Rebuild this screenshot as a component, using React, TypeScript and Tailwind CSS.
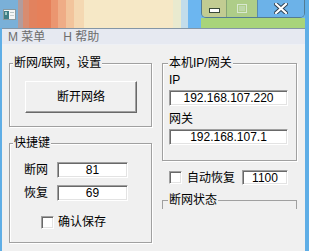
import React from 'react';

// Win classic look helpers
const sunken =
  'bg-white border border-t-[#a0a0a0] border-l-[#a0a0a0] border-b-white border-r-white shadow-[inset_1px_1px_0_#696969,inset_-1px_-1px_0_#e3e3e3]';
const group =
  'border border-[#a0a0a0] shadow-[inset_1px_1px_0_#ffffff,1px_1px_0_#ffffff]';
const legend = 'px-[1px] bg-[#f0f0f0] leading-[14px]';

function Field({ value, className }: { value: string; className: string }) {
  return (
    <div className={`${sunken} ${className} flex items-center justify-center leading-[12px]`}>
      {value}
    </div>
  );
}

function CheckBox() {
  return <div className={`${sunken} w-[13px] h-[13px] shrink-0`} />;
}

function AppIcon() {
  return (
    <svg width="13" height="11" viewBox="0 0 13 11">
      <rect x="0.5" y="0.5" width="12" height="10" fill="#f4f6f6" stroke="#8a9aa0" />
      <rect x="1" y="2" width="5" height="8" fill="#3f7f86" />
      <rect x="2" y="3" width="2" height="3" fill="#9fc9c4" />
      <rect x="7" y="3" width="4" height="1" fill="#b8c4c4" />
      <rect x="7" y="6" width="4" height="1" fill="#c8d0d0" />
    </svg>
  );
}

function CaptionButtons() {
  return (
    <div className="flex h-[18px] rounded-b-[5px] overflow-hidden border border-t-0 border-[#47636f]/70">
      <div className="w-[24px] flex items-end justify-center pb-[4px] bg-[#c2cc92]">
        <svg width="11" height="5" viewBox="0 0 11 5">
          <rect x="0.5" y="0.5" width="10" height="4" fill="#ffffff" stroke="#3a4a3a" />
        </svg>
      </div>
      <div className="w-[31px] flex items-center justify-center border-l border-[#6a8a6a]/60 bg-[#aecd88]">
        <svg width="10" height="9" viewBox="0 0 10 9">
          <rect x="0.5" y="0.5" width="9" height="8" fill="none" stroke="#d8e8d0" strokeWidth="1" />
          <rect x="2" y="2" width="6" height="5" fill="#c4dcb8" opacity="0.7" />
        </svg>
      </div>
      <div className="w-[47px] flex items-center justify-center border-l border-[#4a6f8a]/60 bg-[#6cb2e8]">
        <svg width="14" height="11" viewBox="0 0 14 11">
          <path d="M2 1 L12 10 M12 1 L2 10" stroke="#2c3e50" strokeWidth="4" strokeLinecap="square" />
          <path d="M2 1 L12 10 M12 1 L2 10" stroke="#ffffff" strokeWidth="2.2" strokeLinecap="square" />
        </svg>
      </div>
    </div>
  );
}

export default function App() {
  return (
    <div className="w-[309px] h-[251px] overflow-hidden bg-[#5faee6] font-['Liberation_Sans','Noto_Sans_CJK_SC',sans-serif] text-[12px] text-black">
      {/* Title bar: aero glass tint, drawn as soft colour bands */}
      <div className="h-[28px] flex">
        <div className="w-[18px] pl-[3px] pt-[9px] bg-[#7ab0d8]">
          <AppIcon />
        </div>
        <div className="w-[5px] bg-[#b29c9c]" />
        <div className="w-[6px] bg-[#d88c70]" />
        <div className="w-[8px] bg-[#e2825e]" />
        <div className="w-[14px] bg-[#e6805a]" />
        <div className="w-[8px] bg-[#eb9670]" />
        <div className="w-[8px] bg-[#efac86]" />
        <div className="w-[8px] bg-[#f2c49c]" />
        <div className="w-[10px] bg-[#f4d8b2]" />
        <div className="w-[90px] bg-[#f6e8c6]" />
        <div className="w-[8px] bg-[#e9eacf]" />
        <div className="w-[7px] bg-[#c2dcea]" />
        <div className="w-[13px] bg-[#6cb6f0]" />
        <div className="flex-1 flex flex-col bg-[#72b8e8]">
          <CaptionButtons />
          <div className="flex-1 bg-[#a8d47a]" />
        </div>
        <div className="w-[4px]" />
      </div>

      {/* Client area */}
      <div className="ml-[2px] mr-[4px] h-[223px] bg-[#f0f0f0] border-t border-[#8496a6]">
        {/* Menu bar */}
        <div className="h-[16px] flex items-center gap-[18px] pl-[6px] text-[#6d6d6d] leading-[14px] bg-[#e6e9f1] border-b border-[#eef0f5]">
          <span>M 菜单</span>
          <span>H 帮助</span>
        </div>

        <div className="flex gap-[10px] pl-[7px]">
          {/* Left column */}
          <div className="w-[143px] flex flex-col">
            <fieldset className={`${group} mt-[11px] h-[71px]`}>
              <legend className={`${legend} ml-[3px]`}>断网/联网，设置</legend>
              <button className="mt-[11px] ml-[15px] w-[112px] h-[32px] bg-[#f0f0f0] border border-t-white border-l-white border-b-[#696969] border-r-[#696969] shadow-[inset_-1px_-1px_0_#a0a0a0] leading-[14px]">
                断开网络
              </button>
            </fieldset>

            <fieldset className={`${group} mt-[9px] h-[107px]`}>
              <legend className={`${legend} ml-[3px]`}>快捷键</legend>
              <div className="mt-[12px] pl-[14px] flex items-center">
                <span className="w-[26px] leading-[14px]">断网</span>
                <Field value="81" className="ml-[7px] w-[71px] h-[16px]" />
              </div>
              <div className="mt-[7px] pl-[14px] flex items-center">
                <span className="w-[26px] leading-[14px]">恢复</span>
                <Field value="69" className="ml-[7px] w-[71px] h-[16px]" />
              </div>
              <div className="mt-[14px] pl-[31px] flex items-center">
                <CheckBox />
                <span className="ml-[4px] leading-[14px]">确认保存</span>
              </div>
            </fieldset>
          </div>

          {/* Right column */}
          <div className="w-[135px] flex flex-col">
            <fieldset className={`${group} mt-[11px] h-[105px]`}>
              <legend className={`${legend} ml-[5px]`}>本机IP/网关</legend>
              <div className="mt-[3px] pl-[6px] leading-[14px]">IP</div>
              <Field value="192.168.107.220" className="mt-[3px] ml-[6px] w-[119px] h-[16px]" />
              <div className="mt-[6px] pl-[6px] leading-[14px]">网关</div>
              <Field value="192.168.107.1" className="mt-[3px] ml-[6px] w-[119px] h-[16px]" />
            </fieldset>

            <div className="mt-[9px] pl-[7px] flex items-center h-[15px]">
              <CheckBox />
              <span className="ml-[5px] leading-[14px]">自动恢复</span>
              <Field value="1100" className="ml-[7px] w-[46px] h-[15px]" />
            </div>

            <fieldset className={`${group} mt-[8px] h-[16px] border-b-0 shadow-none`}>
              <legend className={`${legend} ml-[5px]`}>断网状态</legend>
            </fieldset>
          </div>
        </div>
      </div>
    </div>
  );
}
